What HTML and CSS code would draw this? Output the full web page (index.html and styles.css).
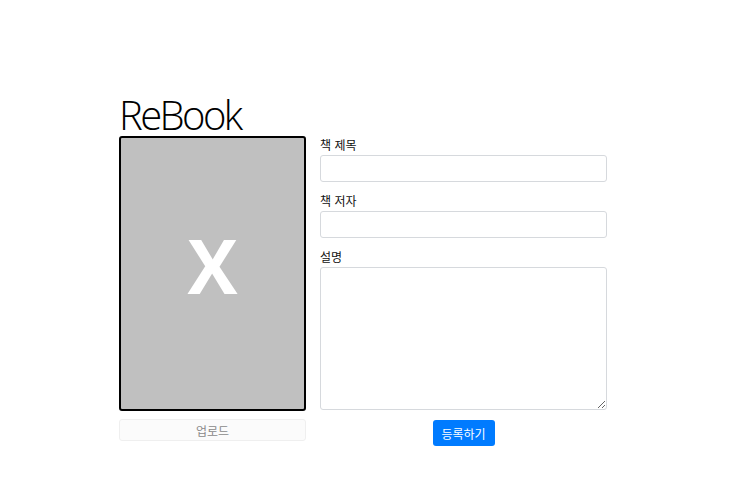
FILE: index.html
```html
<!DOCTYPE html>
<html lang="ko">
<head>
    <meta charset="UTF-8">
    <meta name="viewport" content="width=device-width, initial-scale=1.0">
    <title>ReBook</title>
    <link rel="stylesheet" href="styles.css">
</head>
<body>
    <div class="page">
        <h1 class="title">ReBook</h1>

        <div class="editor">
            <div class="cover-col">
                <div class="cover">X</div>
                <button class="upload">업로드</button>
            </div>

            <form class="book-form">
                <div class="field">
                    <label for="title">책 제목</label>
                    <input type="text" id="title">
                </div>
                <div class="field">
                    <label for="author">책 저자</label>
                    <input type="text" id="author">
                </div>
                <div class="field">
                    <label for="desc">설명</label>
                    <textarea id="desc"></textarea>
                </div>
                <div class="actions">
                    <button type="button" class="submit">등록하기</button>
                </div>
            </form>
        </div>
    </div>
</body>
</html>
```

FILE: styles.css
```css
body {
    margin: 0;
    font-family: "Noto Sans", "Noto Sans CJK KR", sans-serif;
    background: #fff;
    color: #212529;
}
.page {
    padding: 93px 0 0 119px;
}
.title {
    margin: 0;
    font-family: "Open Sans", sans-serif;
    font-weight: 300;
    font-size: 40px;
    line-height: 43px;
    letter-spacing: -2.6px;
    color: #000;
}
.editor {
    display: flex;
    gap: 14px;
}
.cover-col {
    width: 187px;
}
.cover {
    box-sizing: border-box;
    height: 275px;
    background: #c0c0c0;
    border: 2px solid #000;
    border-radius: 3px;
    display: flex;
    align-items: center;
    justify-content: center;
    color: #fff;
    font-family: "Open Sans", sans-serif;
    font-weight: 700;
    font-size: 75px;
    padding-bottom: 18px;
}
.upload {
    display: block;
    width: 100%;
    height: 22px;
    margin-top: 8px;
    background: #fbfbfb;
    border: 1px solid #efefef;
    border-radius: 3px;
    color: #8a8a8a;
    font-family: "Noto Sans CJK KR", sans-serif;
    font-size: 12px;
    padding: 0;
}
.book-form {
    width: 287px;
    margin: 0;
}
.field {
    margin-bottom: 10px;
}
.field label {
    display: block;
    height: 18px;
    line-height: 18px;
    margin-bottom: 1px;
    font-family: "Noto Sans CJK KR", sans-serif;
    font-size: 12px;
    color: #111;
}
input, textarea {
    display: block;
    box-sizing: border-box;
    width: 100%;
    border: 1px solid #d6d9dd;
    border-radius: 3px;
    margin: 0;
}
input {
    height: 27px;
}
textarea {
    height: 143px;
    resize: vertical;
}
.field:last-of-type {
    margin-bottom: 12px;
}
.actions {
    display: flex;
    justify-content: center;
}
.submit {
    height: 26px;
    width: 62px;
    padding: 0;
    background: #007bff;
    border: none;
    border-radius: 3px;
    color: #fff;
    font-family: "Noto Sans CJK KR", sans-serif;
    font-size: 12px;
}
```
